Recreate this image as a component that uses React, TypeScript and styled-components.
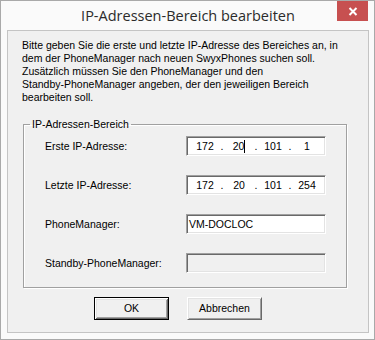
import React from 'react'
import styled, { createGlobalStyle, css } from 'styled-components'

const GlobalStyle = createGlobalStyle`
  html, body {
    margin: 0;
    padding: 0;
    background: #ffffff;
  }
  * {
    box-sizing: border-box;
  }
`

const classicFont = css`
  font-family: 'Liberation Sans', Arial, sans-serif;
  font-size: 10.5px;
  line-height: 13px;
  color: #000;
`

const StyledWindow = styled.div`
  width: 375px;
  height: 340px;
  border: 1px solid #a9a9a9;
  background: #fafafa;
  display: flex;
  flex-direction: column;
  padding: 0 5px 6px 6px;
`

const TitleBar = styled.div`
  height: 29px;
  display: grid;
  grid-template-columns: 1fr auto 1fr;
  align-items: start;
`

const Title = styled.div`
  grid-column: 2;
  font-family: 'Open Sans', 'Noto Sans', sans-serif;
  font-size: 14.5px;
  line-height: 29px;
  color: #2b2b2b;
  white-space: nowrap;
`

const CloseButton = styled.button`
  grid-column: 3;
  justify-self: end;
  width: 31px;
  height: 20px;
  margin: 0 1px 0 0;
  padding: 0;
  border: none;
  background: #c75050;
  display: flex;
  align-items: center;
  justify-content: center;
`

const Client = styled.div`
  flex: 1;
  border: 1px solid #c4c4c4;
  background: #f0f0f0;
  display: flex;
  flex-direction: column;
  padding: 8px 0 0 0;
`

const Intro = styled.p`
  ${classicFont}
  margin: 0 0 0 14px;
  white-space: nowrap;
`

const GroupBox = styled.fieldset`
  ${classicFont}
  margin: 14px 0 0 15px;
  width: 324px;
  padding: 0 0 14px 0;
  border: 1px solid #a0a0a0;
  box-shadow: inset 1px 1px 0 #ffffff, 1px 1px 0 #ffffff;
  min-inline-size: 0;
`

const GroupLegend = styled.legend`
  ${classicFont}
  margin-left: 6px;
  padding: 0 2px;
`

const FieldGrid = styled.div`
  display: grid;
  grid-template-columns: 141px 140px;
  row-gap: 19px;
  padding: 5px 0 0 21px;
  align-items: center;
`

const FieldLabel = styled.label`
  ${classicFont}
  white-space: nowrap;
`

const sunken = css`
  height: 20px;
  border: 1px solid;
  border-color: #a0a0a0 #ffffff #ffffff #a0a0a0;
  box-shadow: inset 1px 1px 0 #696969, inset -1px -1px 0 #e3e3e3;
`

const TextBox = styled.div<{ $disabled?: boolean }>`
  ${classicFont}
  ${sunken}
  background: ${(p) => (p.$disabled ? '#f0f0f0' : '#ffffff')};
  padding: 3px 2px 0 2px;
  white-space: nowrap;
`

const IpBox = styled.div`
  ${classicFont}
  ${sunken}
  background: #ffffff;
  display: flex;
  align-items: center;
  padding: 0 0 0 4px;
`

const Octet = styled.span`
  width: 28px;
  text-align: center;
  white-space: nowrap;
`

const Dot = styled.span`
  width: 6px;
  text-align: center;
`

const Caret = styled.span`
  display: inline-block;
  width: 1px;
  height: 13px;
  background: #000;
  vertical-align: -3px;
`

const ButtonRow = styled.div`
  display: flex;
  gap: 18px;
  margin: 9px 0 0 86px;
`

const PushButton = styled.button<{ $default?: boolean }>`
  ${classicFont}
  width: 75px;
  height: 23px;
  padding: 0;
  background: #f0f0f0;
  border: 1px solid;
  border-color: #ffffff #696969 #696969 #ffffff;
  box-shadow: inset 1px 1px 0 #e3e3e3, inset -1px -1px 0 #a0a0a0;
  ${(p) =>
    p.$default &&
    css`
      border: 1px solid #000;
      box-shadow: inset 1px 1px 0 #ffffff, inset -1px -1px 0 #696969,
        inset 2px 2px 0 #e3e3e3, inset -2px -2px 0 #a0a0a0;
    `}
`

const IpField = ({ octets, caretAt }: { octets: string[]; caretAt?: number }) => (
  <IpBox>
    {octets.map((o, i) => (
      <React.Fragment key={i}>
        <Octet>
          {o}
          {caretAt === i && <Caret />}
        </Octet>
        {i < 3 && <Dot>.</Dot>}
      </React.Fragment>
    ))}
  </IpBox>
)

const App = () => {
  return (
    <>
      <GlobalStyle />
      <StyledWindow>
        <TitleBar>
          <Title>IP-Adressen-Bereich bearbeiten</Title>
          <CloseButton aria-label="Schließen">
            <svg width="10" height="9" viewBox="0 0 10 9">
              <path d="M1.5 1 L8.5 8 M8.5 1 L1.5 8" stroke="#fff" strokeWidth="2" />
            </svg>
          </CloseButton>
        </TitleBar>
        <Client>
          <Intro>
            Bitte geben Sie die erste und letzte IP-Adresse des Bereiches an, in
            <br />
            dem der PhoneManager nach neuen SwyxPhones suchen soll.
            <br />
            Zusätzlich müssen Sie den PhoneManager und den
            <br />
            Standby-PhoneManager angeben, der den jeweiligen Bereich
            <br />
            bearbeiten soll.
          </Intro>
          <GroupBox>
            <GroupLegend>IP-Adressen-Bereich</GroupLegend>
            <FieldGrid>
              <FieldLabel>Erste IP-Adresse:</FieldLabel>
              <IpField octets={['172', '20', '101', '1']} caretAt={1} />
              <FieldLabel>Letzte IP-Adresse:</FieldLabel>
              <IpField octets={['172', '20', '101', '254']} />
              <FieldLabel>PhoneManager:</FieldLabel>
              <TextBox>VM-DOCLOC</TextBox>
              <FieldLabel>Standby-PhoneManager:</FieldLabel>
              <TextBox $disabled />
            </FieldGrid>
          </GroupBox>
          <ButtonRow>
            <PushButton $default>OK</PushButton>
            <PushButton>Abbrechen</PushButton>
          </ButtonRow>
        </Client>
      </StyledWindow>
    </>
  )
}

export default App
